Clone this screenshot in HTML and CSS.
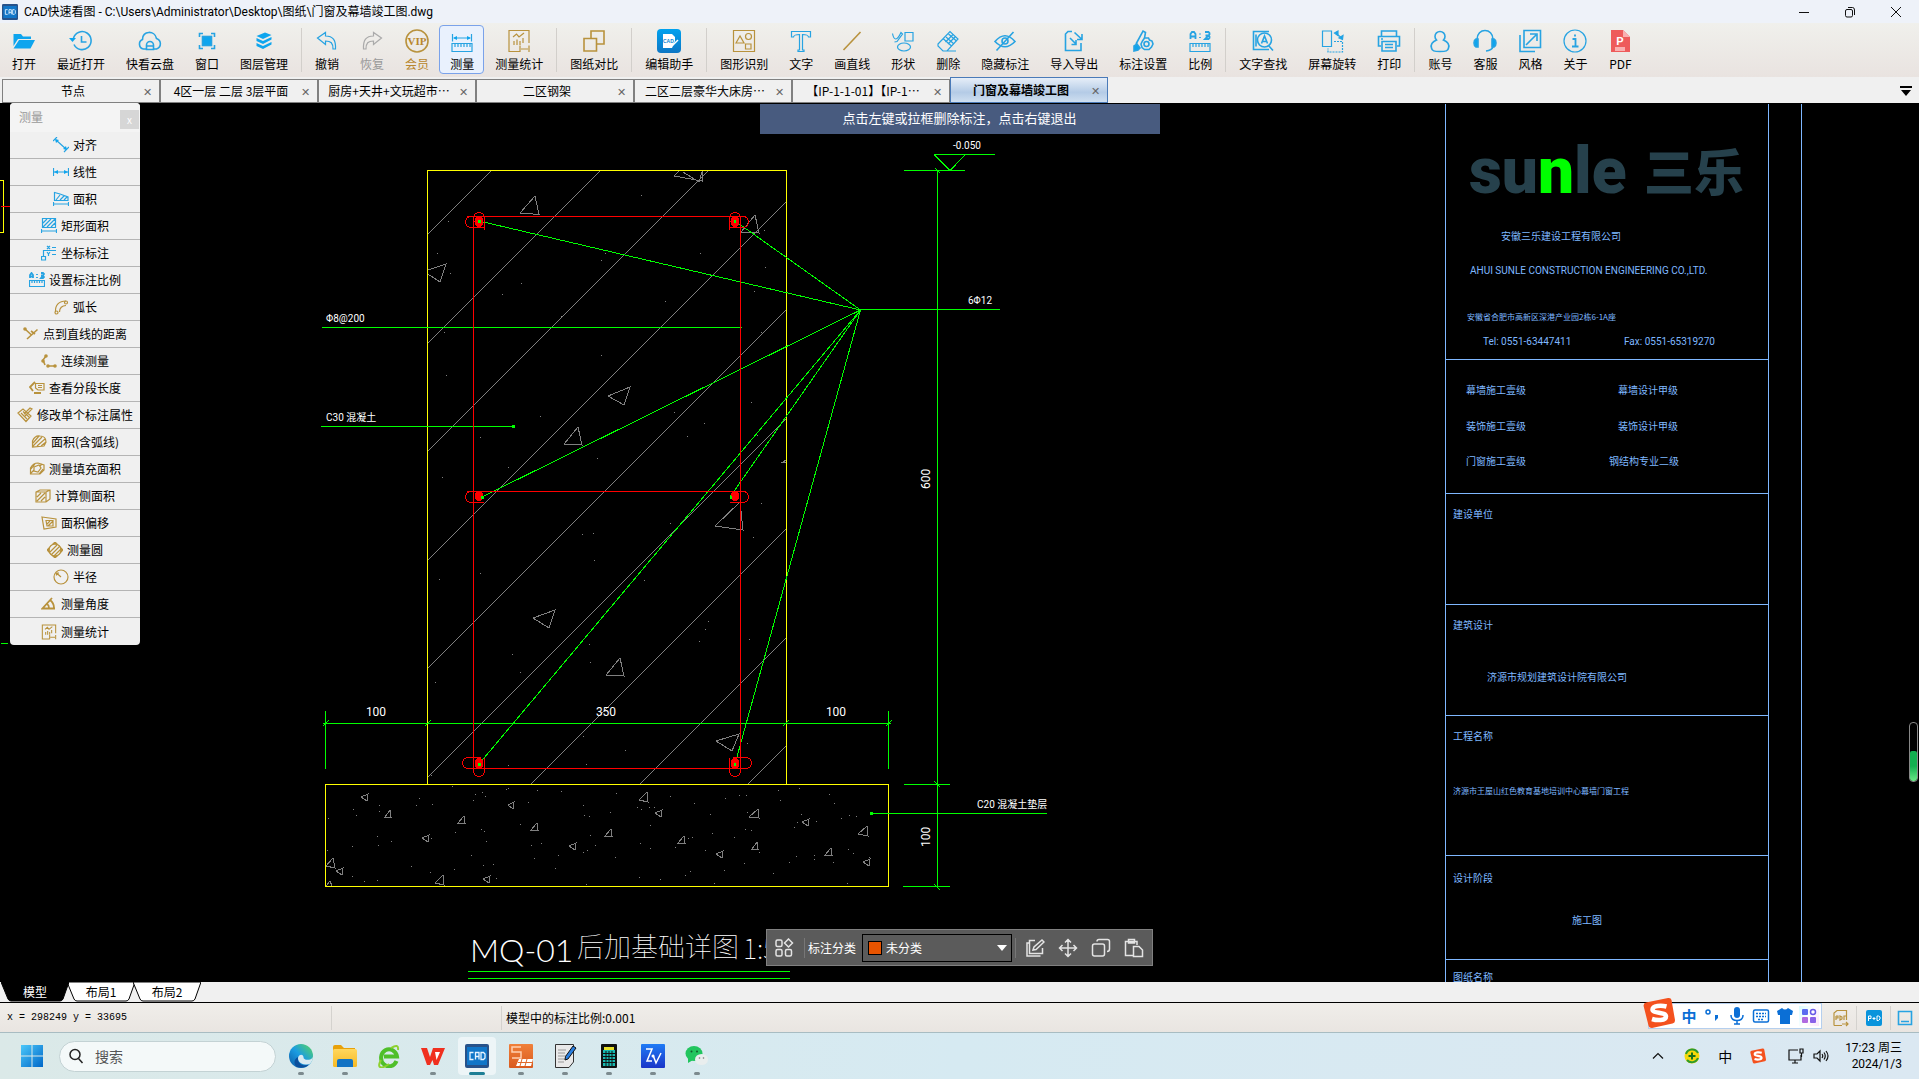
FILE: index.html
```html
<!DOCTYPE html>
<html lang="zh-CN">
<head>
<meta charset="utf-8">
<title>CAD快速看图</title>
<link rel="stylesheet" href="styles.css">
</head>
<body>
<svg class="defs" aria-hidden="true">
  <defs>
    <linearGradient id="azure" x1="0" y1="0" x2="0" y2="1"><stop offset="0" stop-color="#00a2ef"/><stop offset="1" stop-color="#0d76c4"/></linearGradient>
    <linearGradient id="win" x1="0" y1="0" x2="1" y2="1"><stop offset="0" stop-color="#4cc8fa"/><stop offset="1" stop-color="#0067c8"/></linearGradient>
    <linearGradient id="edge" x1="0" y1="1" x2="1" y2="0"><stop offset="0" stop-color="#0c59a4"/><stop offset=".5" stop-color="#1b9de2"/><stop offset="1" stop-color="#5ad85a"/></linearGradient>
    <linearGradient id="fold" x1="0" y1="0" x2="0" y2="1"><stop offset="0" stop-color="#ffd75e"/><stop offset="1" stop-color="#f7b923"/></linearGradient>
    <linearGradient id="orange" x1="0" y1="0" x2="0" y2="1"><stop offset="0" stop-color="#f0803a"/><stop offset="1" stop-color="#d95a1e"/></linearGradient>
    <linearGradient id="zw" x1="0" y1="0" x2="0" y2="1"><stop offset="0" stop-color="#1f7bf5"/><stop offset="1" stop-color="#1b35c8"/></linearGradient>
    <symbol id="sogou" viewBox="0 0 32 32"><path d="M3 5.500L25 1Q28 .5 28.500 3L32 23Q32 26 29.500 26.500L9 31Q6 31 5.500 28.500L.6 9Q.4 6.200 3 5.500Z" fill="#f4511e"/><path d="M23.500 9.500C18 8 9.500 8.500 9.500 12.500C9.500 17 23 14.500 23 19.500C23 24 13.500 23.500 9 22" fill="none" stroke="#fff" stroke-width="4.500"/></symbol>
    <symbol id="cad" viewBox="0 0 24 24"><rect width="24" height="24" rx="2" fill="#27528a"/><rect x="2" y="3" width="20" height="18" fill="#1176c8"/><path d="M8.500 8.500H5V15.500H8.500M10.500 15.500V8.500H14V15.500M10.500 12.500H14M16 8.500H18.500L20 10V14L18.500 15.500H16Z" fill="none" stroke="#e8f4ff" stroke-width="1.300"/></symbol>
    <symbol id="ruler" viewBox="0 0 24 24"><path d="M2 14.500H22V22.500H2ZM5 15V18M8 15V18M11 15V18M14 15V18M17 15V18M20 15V18"/></symbol>
    <symbol id="stats" viewBox="0 0 24 24"><path d="M13 22.500H2V1.500H22V14M6 8L9.500 5L12 8L17 4M7 12V16M10 10.500V16M13 12V16M16 9V14M13 16.500V23M22 16.500V23M14 20H21"/></symbol>
  </defs>
</svg>

<div class="app">
  <header class="titlebar">
    <svg class="ic16"><use href="#cad"/></svg>
    <h1 class="title">CAD快速看图 - C:\Users\Administrator\Desktop\图纸\门窗及幕墙竣工图.dwg</h1>
    <button class="wbtn" aria-label="最小化"><svg class="ic12" viewBox="0 0 12 12"><path d="M1 6.500H11"/></svg></button>
    <button class="wbtn" aria-label="还原"><svg class="ic12" viewBox="0 0 12 12"><rect x="1.500" y="3.500" width="7" height="7.500" rx="1.500"/><path d="M4 1.500H8.500Q10.500 1.500 10.500 4V9"/></svg></button>
    <button class="wbtn" aria-label="关闭"><svg class="ic12" viewBox="0 0 12 12"><path d="M1 1L11 11M11 1L1 11"/></svg></button>
  </header>

  <nav class="toolbar">
    <button class="tool"><svg viewBox="0 0 24 24"><path class="fb" d="M1.500 5H9L11 7.500H19V10H6L1.500 17ZM7 11H23L18.500 19.500H1.500Z"/></svg>打开</button>
    <button class="tool"><svg class="b2" viewBox="0 0 24 24"><path d="M4.500 9A9 9 0 1 1 5 15.500M12.500 7V13H17.500"/><path class="fb" stroke="none" d="M0 9H7L3.500 13Z"/></svg>最近打开</button>
    <button class="tool"><svg class="b2" viewBox="0 0 24 24"><path d="M8 20H5.500A5 5 0 0 1 4.500 10.500C4 1.500 17 1 18.500 9.500A5.500 5.500 0 0 1 18.500 20H16M8.500 20.500V16A3.500 3.500 0 0 1 15.500 16V20.500ZM8.500 17H15.500"/></svg>快看云盘</button>
    <button class="tool"><svg class="b2" viewBox="0 0 24 24"><rect class="fb" x="7.500" y="7.500" width="9" height="9"/><path d="M4.500 8V4.500H8M16 4.500H19.500V8M4.500 16V19.500H8M16 19.500H19.500V16"/></svg>窗口</button>
    <button class="tool"><svg viewBox="0 0 24 24"><path class="fb" d="M4.500 7L13 3.500L19.500 6L11 10ZM4.500 9L11 12L19.500 8V10.500L11 15L4.500 12ZM4.500 14L11 17L19.500 13V15.500L11 20L4.500 17Z"/></svg>图层管理</button>
    <span class="sep"></span>
    <button class="tool"><svg class="b1" viewBox="0 0 24 24"><path d="M2.500 9L10.500 3.500V7C18 7 21 11 20.500 20H18C18 14 16 12 10.500 12V15.500Z"/></svg>撤销</button>
    <button class="tool off"><svg class="g1" viewBox="0 0 24 24"><path d="M21.500 9L13.500 3.500V7C6 7 3 11 3.500 20H6C6 14 8 12 13.500 12V15.500Z"/></svg>恢复</button>
    <button class="tool vip"><svg class="o2" viewBox="0 0 24 24"><circle cx="12" cy="12" r="11"/><text class="viptx" x="12" y="16">VIP</text></svg>会员</button>
    <button class="tool on"><svg class="b1" viewBox="0 0 24 24"><path d="M2.500 5V12.500M21.500 5V12.500M4 9H20"/><path class="fb" stroke="none" d="M3 9L7 7V11ZM21 9L17 7V11Z"/><use href="#ruler"/></svg>测量</button>
    <button class="tool"><svg class="o1" viewBox="0 0 24 24"><use href="#stats"/></svg>测量统计</button>
    <span class="sep"></span>
    <button class="tool"><svg class="o2" viewBox="0 0 24 24"><path d="M9 9V2H22V15H14.500M2 9.500H14.500V22H2Z"/></svg>图纸对比</button>
    <span class="sep"></span>
    <button class="tool"><svg viewBox="0 0 24 24"><rect width="24" height="24" rx="4" fill="url(#azure)"/><path fill="#fff" d="M6 5H15L18 8V12L15 19H6Z"/><path fill="none" stroke="#fff" stroke-width="1.500" d="M15 17L21 11"/><text class="cadtx" x="6" y="14">CAD</text></svg>编辑助手</button>
    <span class="sep"></span>
    <button class="tool"><svg class="o1" viewBox="0 0 24 24"><path d="M1.500 1.500H22.500V22.500H1.500ZM4 14L8 7L12 14Z"/><circle cx="16.500" cy="7.500" r="3"/><path d="M13.500 15H19V20H13.500Z"/></svg>图形识别</button>
    <button class="tool"><svg class="b1" viewBox="0 0 24 24"><path d="M2.500 2.500H21.500V8H19.500C19 6 18 5.500 13.500 5.500V21H15V22.500H9V21H10.500V5.500C6 5.500 5 6 4.500 8H2.500Z"/></svg>文字</button>
    <button class="tool"><svg class="o2" viewBox="0 0 24 24"><path d="M3.500 21L20.500 3"/></svg>画直线</button>
    <button class="tool"><svg class="b1" viewBox="0 0 24 24"><path d="M14 3.500H22V12H14ZM1.500 4.500C3 12 6 12 10 3.500L11.500 5L6 12.500L3.500 13"/><ellipse cx="13" cy="18" rx="6.500" ry="4"/></svg>形状</button>
    <button class="tool"><svg class="b1" viewBox="0 0 24 24"><path d="M2 15L14 2.500L22 10L11 22H7L2 17ZM7 9.500L15.500 17M8 22H20"/><path d="M10 8L18 15M12.500 5L20.500 12M17 5.500L9.500 13M19.500 7.500L12 15"/></svg>删除</button>
    <button class="tool"><svg class="b2" viewBox="0 0 24 24"><path d="M2 12.500Q12 1 22 12.500Q12 23 2 12.500ZM3.500 21.500L20.500 3"/><circle cx="12" cy="12" r="3"/></svg>隐藏标注</button>
    <button class="tool"><svg class="b2" viewBox="0 0 24 24"><path d="M10 2.500H6L3.500 5V21.500H19V14M8 9L14 15M14 11V15.500H9.500M19.500 10L12.500 3.500M20 5V10.500H15"/></svg>导入导出</button>
    <button class="tool"><svg class="b2" viewBox="0 0 24 24"><path class="fb" d="M3 22V17L6 15L9 19L7 21Z"/><path d="M5 15L12 2L14.500 3.500L13.500 9"/><circle cx="15.500" cy="15" r="2.500"/><path d="M13.500 9H17.500L18.500 11L21 12L22 15L20.500 18L18 20.500H13.500L11 18.500L10 15L11.500 12Z"/></svg>标注设置</button>
    <button class="tool"><svg class="b1" viewBox="0 0 24 24"><path class="thick" d="M2.500 10V5L4 3H6L7.500 5V10M2.500 7.500H7.500M12 4.500V5.500M12 8V9M17 3H20.500L21.500 4V5.500L20.500 6.500H17.500M20.500 6.500L21.500 7.500V9L20.500 10H17Z"/><use href="#ruler"/></svg>比例</button>
    <span class="sep"></span>
    <button class="tool"><svg class="b2" viewBox="0 0 24 24"><path d="M18 20.500H2.500V2.500H18M5 5.500V17.500M17 16L22 21.500"/><circle cx="13.500" cy="11" r="7"/><path d="M10.500 14.500L13.500 7L16.500 14.500M11.500 12.500H15.500"/></svg>文字查找</button>
    <button class="tool"><svg class="b1" viewBox="0 0 24 24"><path d="M2.500 2H11.500V17.500H2.500Z"/><path stroke-dasharray="2 1" d="M14 12.500H22.500V23H8V19.500"/><path d="M16 4.500L22 9"/><path class="fb" d="M14.500 4L18 2V6.500ZM22.500 10.500L19 9L23 6.500Z"/></svg>屏幕旋转</button>
    <button class="tool"><svg class="b2" viewBox="0 0 24 24"><path d="M4.500 7V2H19.500V7M4 17H1.500V7.500H22.500V17H20M5 12.500H19V22H5ZM8 15.500H16M8 18.500H16M4 10H6"/></svg>打印</button>
    <span class="sep"></span>
    <button class="tool"><svg class="b2" viewBox="0 0 24 24"><path d="M8.500 11A5 5 0 1 1 15.500 11C20 13 21.500 16 20.500 19C20 22 18 22.500 12 22.500S4 22 3.500 19C2.500 16 4 13 8.500 11Z"/></svg>账号</button>
    <button class="tool"><svg class="b2" viewBox="0 0 24 24"><path d="M4 10.500C4 -1.500 20 -1.500 20 10.500M20 18C19 20.500 17 21.500 13 22"/><path class="fb" d="M5 10V18H3Q1 17 1 14T3 10ZM19 10V18H21Q23 17 23 14T21 10Z"/></svg>客服</button>
    <button class="tool"><svg class="b2" viewBox="0 0 24 24"><path d="M6 1.500H22.500V18.500H6ZM2 6V22.500H17M8 16L18 6M12 5H19V12"/></svg>风格</button>
    <button class="tool"><svg class="b1" viewBox="0 0 24 24"><circle cx="12" cy="12" r="11"/><path class="thick" d="M12 5.500V7.500M9.500 10H12.500V17M9 17.500H15.500"/></svg>关于</button>
    <button class="tool"><svg viewBox="0 0 24 24"><path fill="#ee5b5b" d="M3 1H15L22 8V23H3Z"/><path fill="#f9b0b0" d="M15 1L22 8H15ZM7 18H17V22H7Z"/><text class="pdftx" x="12" y="16">P</text></svg>PDF</button>
  </nav>

  <div class="tabs">
    <div class="tab"><button class="tabname">节点</button><button class="x" aria-label="关闭标签">✕</button></div>
    <div class="tab"><button class="tabname">4区一层 二层 3层平面</button><button class="x" aria-label="关闭标签">✕</button></div>
    <div class="tab"><button class="tabname">厨房+天井+文玩超市⋯</button><button class="x" aria-label="关闭标签">✕</button></div>
    <div class="tab"><button class="tabname">二区钢架</button><button class="x" aria-label="关闭标签">✕</button></div>
    <div class="tab"><button class="tabname">二区二层豪华大床房⋯</button><button class="x" aria-label="关闭标签">✕</button></div>
    <div class="tab"><button class="tabname">【IP-1-1-01】【IP-1⋯</button><button class="x" aria-label="关闭标签">✕</button></div>
    <div class="tab active"><button class="tabname">门窗及幕墙竣工图</button><button class="x" aria-label="关闭标签">✕</button></div>
    <button class="tablist" aria-label="标签列表"><svg class="ic12" viewBox="0 0 12 12"><path d="M0 1H12V3H0ZM1 5H11L6 11Z"/></svg></button>
  </div>

  <main class="canvas">
    <svg class="drawing">
      <defs><clipPath id="col"><rect x="428" y="171" width="358" height="613"/></clipPath></defs>
      <g transform="translate(0,-103)">
        <g class="gray" clip-path="url(#col)">
          <path d="M427.500 234.500L491.500 170.500M427.500 343.500L600.500 170.500M427.500 451.500L708.500 170.500M427.500 560.500L817.500 170.500M427.500 668.500L925.500 170.500M427.500 777.500L1034.500 170.500M530.500 784.500L786.500 528.500M639.500 784.500L786.500 637.500M747.500 784.500L786.500 745.500"/>
          <path d="M535 196L520 213L539 214.500ZM446 264L424 271.500L440 282ZM630 387L608 396L624 405ZM578 427L564 444L582 445ZM755 215L741 232L759 233ZM740 502L715 526L743 530ZM555 610L533 618L549 628ZM620 658L606 675L624 676ZM739 734L716 741L732 751ZM682 168L674 176L702 181V168ZM683 172L699 182L702 172M786 460L783 462H786"/>
          <path d="M448 221h1M437 253h1M450 273h1M521 283h1M502 294h1M601 260h1M605 253h1M700 253h1M641 195h1M665 301h1M561 316h1M444 332h1M601 355h1M446 375h1M540 416h1M674 412h1M704 423h1M687 436h1M597 458h1M480 437h1M508 467h1M442 477h1M764 230h1M765 267h1M754 291h1M761 332h1M751 402h1M757 435h1M761 503h1M582 534h1M593 533h1M594 560h1M670 523h1M644 580h1M439 579h1M480 573h1M512 654h1M520 672h1M590 662h1M589 644h1M435 682h1M708 621h1M705 629h1M699 641h1M749 639h1M753 537h1M583 736h1M625 750h1M508 765h1M586 764h1M747 743h1M431 775h1"/>
        </g>
        <g class="gray">
          <path d="M368 794L361 797L367 801ZM514 802L508 805L513 809ZM429 835L422 838L428 842ZM343 868L336 871L342 875ZM490 876L483 879L489 883ZM576 843L569 846L575 850ZM662 810L655 813L661 817ZM809 819L802 822L808 826ZM723 851L716 854L722 858ZM870 859L863 862L869 866Z"/>
          <path d="M390 810L385 817H391ZM464 816L458 823H465ZM537 823L531 830H538ZM611 829L605 836H612ZM684 836L678 843H685ZM757 842L752 849H758ZM831 848L825 855H832ZM333 858L326 866L335 868ZM443 875L435 883L444 885ZM647 792L639 800L648 802ZM758 809L749 817L759 818ZM867 826L858 834L868 836ZM326 886L330 881L332 886"/>
          <path d="M452 786h1M419 798h1M416 805h1M432 804h1M379 805h1M379 811h1M353 809h1M356 815h1M328 818h1M377 836h1M378 845h1M391 841h1M352 846h1M327 850h1M411 866h1M430 872h1M454 869h1M352 876h1M364 881h1M377 880h1M431 838h1M455 832h1M473 800h1M475 794h1M482 792h1M485 796h1M506 789h1M508 788h1M528 802h1M537 790h1M561 791h1M520 824h1M481 829h1M484 831h1M486 841h1M471 855h1M483 865h1M493 864h1M496 878h1M531 845h1M541 843h1M534 858h1M558 855h1M555 868h1M583 805h1M584 815h1M589 816h1M610 812h1M616 793h1M590 835h1M595 845h1M583 852h1M587 850h1M615 857h1M637 807h1M641 809h1M649 807h1M654 807h1M670 796h1M650 825h1M640 843h1M650 848h1M675 847h1M688 838h1M692 837h1M639 877h1M660 879h1M685 875h1M690 871h1M694 803h1M710 814h1M712 833h1M705 850h1M734 837h1M745 829h1M751 830h1M747 812h1M739 795h1M746 795h1M725 798h1M778 790h1M780 800h1M799 788h1M801 814h1M797 822h1M794 827h1M816 821h1M829 794h1M834 803h1M841 818h1M849 815h1M856 816h1M848 849h1M853 853h1M814 855h1M814 859h1M796 856h1M789 862h1M773 873h1M833 862h1M847 883h1M744 863h1M724 870h1M714 883h1M586 884h1M759 852h1M869 857h1"/>
        </g>
        <path class="yellow" d="M427.500 784V170.500H786.500V784M325.500 784.500H888.500V886.500H325.500ZM0 180.500H3.500V232.500H0"/>
        <g class="green">
          <path d="M322 327.500H742M321 426.500H514M323 723.500H891M325.500 711V769M888.500 711V769M860 309.500H1000M937.500 170V888M904 170.500H965M904 784.500H950M903 886.500H950M871 813.500H1047M934 154.500H995M468 971.500H790M468 978.500H790M1 643.500H8"/>
          <path d="M934 154.500L950 170.500L965.500 154.500M860.500 310L479 221M860.500 310L735 221M860.500 310L482 497M860.500 310L730 497M860.500 310L479 764M860.500 310L735 764M323 726L329 720M425 726L431 720M783 726L789 720M886 726L892 720M935 168L940 173M934 781L940 787M934 884L940 890"/>
          <path class="endpt" d="M512 426.500h3M870 813.500h3"/>
        </g>
        <g class="red">
          <path d="M473.500 216V772M740.500 216V772M467 216.500H746M467 491.500H746M467 768.500H747M1 206.500H10"/>
          <g id="hooks">
            <path d="M484 227.500H471A5.500 5.500 0 0 1 471 216.500M473.500 218A5.500 5.500 0 0 1 484.500 218V230M484 502.500H471A5.500 5.500 0 0 1 471 491.500M481 757.500H468A5.500 5.500 0 0 0 468 768.500M484.500 758V771A5.500 5.500 0 0 1 473.500 771"/>
            <path class="bar" d="M475 221.500A4 5 0 1 1 483 221.500A4 5 0 1 1 475 221.500M475 496A4 5 0 1 1 483 496A4 5 0 1 1 475 496M475 763.500A4 5 0 1 1 483 763.500A4 5 0 1 1 475 763.500"/>
          </g>
          <use href="#hooks" transform="translate(1214,0) scale(-1,1)"/>
        </g>
        <path class="green endpt" d="M478 221.500h3M734 221.500h2M481 497h3M730 497h2M478 764h3M734 764h2"/>
        <g class="cadtext">
          <text x="953" y="149">-0.050</text>
          <text x="326" y="322">Φ8@200</text>
          <text x="326" y="421">C30 混凝土</text>
          <text x="968" y="304">6Φ12</text>
          <text x="977" y="808">C20 混凝土垫层</text>
        </g>
        <g class="cadtext dim">
          <text x="376" y="716">100</text>
          <text x="606" y="716">350</text>
          <text x="836" y="716">100</text>
          <text transform="translate(930,479) rotate(-90)">600</text>
          <text transform="translate(930,837) rotate(-90)">100</text>
        </g>
        <text class="big latin" x="470" y="962">MQ-01</text>
        <text class="big" x="577" y="957">后加基础详图</text>
        <text class="big" x="743" y="959">1:5</text>
        <path class="blue" d="M1445.500 104V982M1768.500 104V982M1801.500 104V982M1445 359.500H1768M1445 493.500H1768M1445 604.500H1768M1445 715.500H1768M1445 855.500H1768M1445 959.500H1768"/>
        <text class="logo" x="1469" y="193">su<tspan class="lime">n</tspan>le</text>
        <text class="logo zh" x="1644" y="191">三乐</text>
        <g class="block">
          <text x="1501" y="240">安徽三乐建设工程有限公司</text>
          <text class="en" x="1470" y="274">AHUI SUNLE CONSTRUCTION ENGINEERING CO.,LTD.</text>
          <text class="tiny" x="1467" y="320">安徽省合肥市高新区深港产业园2栋6-1A座</text>
          <text class="en" x="1483" y="345">Tel: 0551-63447411</text>
          <text class="en" x="1624" y="345">Fax: 0551-65319270</text>
          <text x="1466" y="394">幕墙施工壹级</text><text x="1618" y="394">幕墙设计甲级</text>
          <text x="1466" y="430">装饰施工壹级</text><text x="1618" y="430">装饰设计甲级</text>
          <text x="1466" y="465">门窗施工壹级</text><text x="1609" y="465">钢结构专业二级</text>
          <text x="1453" y="518">建设单位</text>
          <text x="1453" y="629">建筑设计</text>
          <text x="1487" y="681">济源市规划建筑设计院有限公司</text>
          <text x="1453" y="740">工程名称</text>
          <text class="tiny" x="1453" y="794">济源市王屋山红色教育基地培训中心幕墙门窗工程</text>
          <text x="1453" y="882">设计阶段</text>
          <text x="1572" y="924">施工图</text>
          <text x="1453" y="981">图纸名称</text>
        </g>
      </g>
    </svg>

    <div class="hint">点击左键或拉框删除标注，点击右键退出</div>

    <aside class="palette">
      <div class="phead"><span>测量</span><button class="px" aria-label="关闭测量">x</button></div>
      <div class="plist">
        <button class="pi"><svg class="b1" viewBox="0 0 16 16"><path d="M3 3L13 12M0 4L4 0M11 15L16 10"/><path class="fb" stroke="none" d="M2 2L6 3L3 6ZM14 13L10 12L13 9Z"/></svg>对齐</button>
        <button class="pi"><svg class="b1" viewBox="0 0 16 16"><path d="M.5 4V12M15.500 4V12M1 8H15"/><path class="fb" stroke="none" d="M1 8L5 6V10ZM15 8L11 6V10Z"/></svg>线性</button>
        <button class="pi"><svg class="b1" viewBox="0 0 16 16"><path d="M1.500 9.500V1.500L7 3L15 6V9.500ZM3 9L7 4M7 9L11 5M11 9L14 6M.5 11V15M15.500 11V15M1 13H15"/></svg>面积</button>
        <button class="pi"><svg class="b1" viewBox="0 0 16 16"><path d="M1.500 .5H14.500V9.500H1.500ZM2 5L6 1M2 9L10 1M6 9L14 1M10 9L14 5M.5 11V15M15.500 11V15M1 13H15"/></svg>矩形面积</button>
        <button class="pi"><svg class="b1" viewBox="0 0 16 16"><path d="M.5 11.500H4.500V15H.5ZM2.500 11V5.500H15M6 1L9 4M9 1L6 4M11 2.500H15M6 7L7.500 9L9 7M7.500 9V11M11 9.500H15"/></svg>坐标标注</button>
        <button class="pi"><svg class="b1" viewBox="0 0 16 16"><path class="thick" d="M1 6V3L2.500 1L4 3V6M1 4.500H4M8 2V3M8 5V6M12 1H14L15 2L14 3.500H12M14 3.500L15 5L14 6H12Z"/><path d="M.5 8.500H15.500V14.500H.5ZM3 9V11M5.500 9V11M8 9V11M10.500 9V11M13 9V11"/></svg>设置标注比例</button>
        <button class="pi"><svg class="o1" viewBox="0 0 16 16"><path d="M2.500 13C2 6 6 2 13 2M6.500 13C6.500 9 9 6.500 13 6.500"/><circle cx="3.500" cy="13.500" r="1.500"/><circle cx="13" cy="3.500" r="1.500"/></svg>弧长</button>
        <button class="pi"><svg class="o2" viewBox="0 0 16 16"><path d="M2 3L8.500 9M4 13L14.500 3.500M8 5L12 8"/><circle class="fo" cx="2" cy="3" r="1"/></svg>点到直线的距离</button>
        <button class="pi"><svg class="o2" viewBox="0 0 16 16"><path d="M5 3L2 7L4 12M7 13H14"/><circle class="fo" cx="5" cy="3" r="1"/><circle class="fo" cx="2" cy="8" r="1"/><circle class="fo" cx="7" cy="13" r="1"/><circle class="fo" cx="14" cy="13" r="1"/></svg>连续测量</button>
        <button class="pi"><svg class="o1" viewBox="0 0 16 16"><path class="thick" d="M6 2L1 7L4 11M5 13H12"/><path d="M6.500 3.500H15V10H9L6.500 8ZM9 5.500H13M9 7.500H13"/></svg>查看分段长度</button>
        <button class="pi"><svg class="o1" viewBox="0 0 16 16"><path d="M1 6L6 2L14 9L9 14.500ZM4 6L10 12M6 4.500L12 10M8 9L15 2L13 1L7 7"/></svg>修改单个标注属性</button>
        <button class="pi"><svg class="o1" viewBox="0 0 16 16"><path d="M1.500 13V7Q4 1 9 2Q15 2 15 8L13 12ZM2 9L8 2M2 12L11 3M6 12L14 5M10 12L15 8"/></svg>面积(含弧线)</button>
        <button class="pi"><svg class="o1" viewBox="0 0 16 16"><path d="M1.500 13V7Q4 2 9 2L15 4V9L11 13ZM2 8L6 3M2 12L5 9M5 6L10 4L12 7L9 11L5 10ZM10 13L14 8M11 5L13 3"/></svg>测量填充面积</button>
        <button class="pi"><svg class="o1" viewBox="0 0 16 16"><path d="M1 4L5 2H15V11L11 14H1ZM1 4H11V14M11 4L15 2M2 9L6 5M2 13L10 5M6 13L10 9"/></svg>计算侧面积</button>
        <button class="pi"><svg class="o1" viewBox="0 0 16 16"><path d="M1 2L15 4V12L3 14ZM5 5.500H12V11H6ZM6 9L9 6M7 11L12 6"/></svg>面积偏移</button>
        <button class="pi"><svg class="o1" viewBox="0 0 16 16"><circle cx="8" cy="8" r="6"/><path d="M3 10L10 3M4 13L13 4M7 14L14 7"/><path class="fo" d="M8 0L10 2H6ZM8 16L10 14H6ZM0 8L2 6V10ZM16 8L14 6V10Z"/></svg>测量圆</button>
        <button class="pi"><svg class="o1" viewBox="0 0 16 16"><circle cx="8" cy="8" r="7"/><path d="M8 8L3.500 4M3.500 6.500V4H6"/></svg>半径</button>
        <button class="pi"><svg class="o1" viewBox="0 0 16 16"><path class="thick" d="M11 2L1.500 12.500H14M9 4Q13 7 13 12M6 8Q8 9 8 12"/></svg>测量角度</button>
        <button class="pi"><svg class="o2" viewBox="0 0 24 24"><use href="#stats"/></svg>测量统计</button>
      </div>
    </aside>

    <div class="meter"><span></span></div>

    <form class="markbar">
      <svg class="w2 ic20" viewBox="0 0 20 20"><rect x="2" y="2" width="6" height="6.500" rx="1.500"/><path d="M14.500 1L18.500 5L14.500 9L10.500 5Z"/><rect x="2" y="11.500" width="6" height="6.500" rx="1.500"/><rect x="11.500" y="11.500" width="6" height="6.500" rx="1.500"/></svg>
      <span class="msep"></span>
      <label for="cat">标注分类</label>
      <span class="combo"><i class="swatch"></i><select id="cat"><option>未分类</option></select></span>
      <span class="msep"></span>
      <button type="button" class="mb" aria-label="编辑"><svg class="w2 ic20" viewBox="0 0 20 20"><path d="M10 2.500H4.500V15.500H17.500V10M4.500 5H2V18H15.500M8 12L9 9L17 2L19 4L11 11.500Z"/></svg></button>
      <button type="button" class="mb" aria-label="移动"><svg class="w2 ic20" viewBox="0 0 20 20"><path d="M10 2V18M2 10H18M7 4.500L10 1.500L13 4.500M7 15.500L10 18.500L13 15.500M4.500 7L1.500 10L4.500 13M15.500 7L18.500 10L15.500 13"/></svg></button>
      <button type="button" class="mb" aria-label="复制"><svg class="w2 ic20" viewBox="0 0 20 20"><rect x="1.500" y="6" width="12" height="12" rx="2"/><path d="M6 3.500Q6 1.500 8 1.500H16.500Q18.500 1.500 18.500 3.500V11Q18.500 13.500 16 13.500"/></svg></button>
      <button type="button" class="mb" aria-label="粘贴"><svg class="w2 ic20" viewBox="0 0 20 20"><path d="M9 17.500H1.500V3.500H13V7M4.500 1.500H10.500V5H4.500ZM9.500 8.500H15L18.500 12V18.500H9.500Z"/></svg></button>
    </form>
  </main>

  <div class="sheets">
    <button class="sheet cur"><svg viewBox="0 0 68 20" preserveAspectRatio="none"><path d="M0 0L7 17Q8 19 10 19H59Q61 19 62 17L68 0Z"/></svg><span>模型</span></button>
    <button class="sheet"><svg viewBox="0 0 68 20" preserveAspectRatio="none"><path d="M0 0L7 17Q8 19 10 19H59Q61 19 62 17L68 0Z"/></svg><span>布局1</span></button>
    <button class="sheet"><svg viewBox="0 0 68 20" preserveAspectRatio="none"><path d="M0 0L7 17Q8 19 10 19H59Q61 19 62 17L68 0Z"/></svg><span>布局2</span></button>
  </div>

  <footer class="status">
    <span class="coords">x = 298249 y = 33695</span>
    <span class="blank"></span>
    <span class="ratio">模型中的标注比例:0.001</span>
    <div class="ime">
      <svg class="imelogo"><use href="#sogou"/></svg>
      <span class="zhong">中</span>
      <svg class="ic20" viewBox="0 0 20 20"><circle cx="5" cy="6" r="2" fill="none" stroke="#0b6fd6" stroke-width="1.500"/><path d="M12 9H15V12L12 15" fill="#0b6fd6"/></svg>
      <svg class="ic20" viewBox="0 0 20 20"><rect x="7" y="1" width="6" height="11" rx="3" fill="#0b6fd6"/><path d="M4 9Q4 14.500 10 14.500T16 9M10 15V18M7 18H13" fill="none" stroke="#0b6fd6" stroke-width="1.500"/></svg>
      <svg class="ic20" viewBox="0 0 20 20"><rect x="2.500" y="4" width="15" height="12" rx="1.500" fill="none" stroke="#0b6fd6" stroke-width="1.500"/><path d="M5 7.500H15M5 10.500H15M7 13.500H13" stroke="#0b6fd6" stroke-width="1.500" stroke-dasharray="2 1"/></svg>
      <svg class="ic20" viewBox="0 0 20 20"><path d="M2 5L7 2Q10 5 13 2L18 5L17 9H15V18H5V9H3Z" fill="#0b6fd6"/></svg>
      <svg class="ic20 glow" viewBox="0 0 20 20"><rect x="3" y="3" width="6" height="6" rx="1" fill="#5b6cf0"/><circle cx="14" cy="6" r="2.500" fill="none" stroke="#6a5be8" stroke-width="1.500"/><rect x="3" y="11" width="6" height="6" rx="1" fill="#b06ae0"/><rect x="11" y="11" width="6" height="6" rx="1" fill="#8a62e8"/></svg>
    </div>
    <button class="sb" aria-label="导出PDF"><svg class="o1 ic20" viewBox="0 0 20 20"><path d="M4 17.500V5L7 2.500H16.500V12M4 17.500H12M12 16H18M16 14L18 16L16 18M6 8V12M6 8H8V10H6M10 8V12L12 11V9ZM14 12V8H16"/></svg></button>
    <button class="sb" aria-label="P+D"><svg class="ic20" viewBox="0 0 20 20"><rect x="2" y="2" width="16" height="16" rx="2" fill="#0a94dc"/><path d="M4.500 13V8H7V10.500H4.500M8.500 10.500H11.500M10 9V12M13 8V12.500H14.500L16 11V9L14.500 8Z" fill="none" stroke="#fff"/></svg></button>
    <button class="sb" aria-label="窗口"><svg class="b2 ic20" viewBox="0 0 20 20"><path d="M3.500 3.500H16.500V16.500H3.500ZM6 13.500H14"/></svg></button>
  </footer>

  <div class="taskbar">
    <button class="task start" aria-label="开始"><svg viewBox="0 0 24 24"><path fill="url(#win)" d="M1 1H11.500V11.500H1ZM12.500 1H23V11.500H12.500ZM1 12.500H11.500V23H1ZM12.500 12.500H23V23H12.500Z"/></svg></button>
    <label class="search"><svg class="ic16" viewBox="0 0 16 16"><circle cx="7" cy="6.500" r="5" fill="none" stroke="#222" stroke-width="1.500"/><path d="M10.500 10.500L14.500 15" stroke="#222" stroke-width="1.500"/></svg><input type="text" placeholder="搜索" aria-label="搜索"></label>
    <button class="task run" aria-label="Edge"><svg viewBox="0 0 24 24"><circle cx="12" cy="12" r="12" fill="url(#edge)"/><path fill="#d9eaf1" d="M24 13C22 17 14 16.500 14.500 13C14 10 10 10 9 14C9 19 14 21 20 20.500C22 19 23.500 17 24 13Z"/><path fill="#0c4f9c" d="M9 13C8 19 13 23 20 20.500C17 24 12 24.500 8 23C4 20 5 15 9 13Z"/></svg></button>
    <button class="task run" aria-label="文件资源管理器"><svg viewBox="0 0 24 24"><path fill="#e8a10a" d="M0 3Q0 1 2 1H8L11 4H22V8H0Z"/><rect y="5" width="24" height="18" rx="1.500" fill="url(#fold)"/><path fill="#1273c4" d="M4 23V17Q4 15 6 15H18Q20 15 20 17V23Z"/></svg></button>
    <button class="task" aria-label="浏览器"><svg viewBox="0 0 24 24"><path fill="none" stroke="#4fbf2a" stroke-width="4" d="M19.500 17A8 8.500 0 1 1 20 12.500H7"/><path fill="none" stroke="#8ed12e" stroke-width="2" d="M4 16C-1 25 5 25 12 20M14 4Q22 -1 21 6"/></svg></button>
    <button class="task run" aria-label="WPS"><svg viewBox="0 0 24 24"><path fill="#f0301f" d="M0 4H6L9 13L12 4H24L17 21H13L11.500 16L9 21H6Z"/><path fill="#fff" d="M14 8H19L15.500 16Z"/></svg></button>
    <button class="task run now" aria-label="CAD快速看图"><svg><use href="#cad"/></svg></button>
    <button class="task run" aria-label="速写"><svg viewBox="0 0 24 24"><rect width="24" height="24" rx="1" fill="url(#orange)"/><path fill="none" stroke="#ffd0b0" stroke-width="1.500" d="M12 3H3V8H12V14H3"/><path fill="#fff" d="M10 15H24L22 22H7Z"/><path stroke="#e06a2a" d="M9 18.500H23M13 15L11 22M18 15L16 22"/></svg></button>
    <button class="task run" aria-label="记事本"><svg viewBox="0 0 24 24"><path fill="#e9e9e9" stroke="#333" d="M2.500 .5H20.500V18L16 23.500H2.500Z"/><path stroke="#999" d="M5 6H13M5 9H12M5 12H14M5 15H13M5 18H11"/><path fill="#2a7fe0" stroke="#111" d="M20 2L23 4L15 15L12 16L12.500 12.500Z"/></svg></button>
    <button class="task run" aria-label="计算器"><svg viewBox="0 0 24 24"><rect x="4" width="16" height="24" rx="1" fill="#111"/><rect x="6" y="6" width="12" height="16" fill="#18b8b0"/><rect x="7" y="3" width="10" height="3" fill="#e8e12a"/><path stroke="#111" d="M6 9.500H18M6 12.500H18M6 15.500H18M6 18.500H18M9 7V22M12 7V22M15 7V22"/></svg></button>
    <button class="task run" aria-label="ZWCAD"><svg viewBox="0 0 24 24"><rect width="24" height="24" rx="1" fill="url(#zw)"/><path fill="none" stroke="#fff" stroke-width="1.500" d="M5 5H11L6 17H11M12 11L15 19L20 9"/><circle cx="12" cy="12" r="1.500" fill="#fff"/></svg></button>
    <button class="task run" aria-label="微信"><svg viewBox="0 0 24 24"><ellipse cx="9" cy="9.500" rx="8.500" ry="7.500" fill="#22c55e"/><path fill="#22c55e" d="M3 14V19L8 16Z"/><ellipse cx="16.500" cy="15.500" rx="6.500" ry="5.500" fill="#e9eeee"/><circle cx="6.500" cy="7.500" r="1" fill="#125c2c"/><circle cx="12" cy="7.500" r="1" fill="#125c2c"/><circle cx="14.500" cy="14" r=".8" fill="#777"/><circle cx="18.500" cy="14" r=".8" fill="#777"/></svg></button>
    <div class="tray">
      <svg class="ic16 k" viewBox="0 0 16 16"><path d="M3 10.500L8 5.500L13 10.500"/></svg>
      <svg class="ic16" viewBox="0 0 16 16"><circle cx="8" cy="8" r="7.500" fill="#f5d90a"/><path d="M2 6A6.500 6.500 0 0 1 14 5M14 10A6.500 6.500 0 0 1 3 12" fill="none" stroke="#2d9a2d" stroke-width="2"/><path d="M8 4.500V11.500M4.500 8H11.500" stroke="#17731a" stroke-width="2"/></svg>
      <span class="lang">中</span>
      <svg class="ic16"><use href="#sogou"/></svg>
      <span class="net">
      <svg class="ic16 k" viewBox="0 0 16 16"><path d="M10 2H1V12H13V7M4 15H10M7 12V15M12 1H15V5H12ZM13.500 5V9"/></svg>
      <svg class="ic16 k" viewBox="0 0 16 16"><path d="M1 6H4L7 3V13L4 10H1ZM9 6Q10.500 8 9 10M11 4.500Q13.500 8 11 11.500M13 3Q17 8 13 13"/></svg>
      </span>
      <time class="clock">17:23 周三<br>2024/1/3</time>
    </div>
  </div>
</div>
</body>
</html>
```

FILE: styles.css
```css
* { box-sizing: border-box; }
body { margin: 0; font: 12px/16px "Noto Sans CJK SC", sans-serif; color: #000; }
button { font: inherit; color: inherit; background: none; border: 0; padding: 0; margin: 0; }
svg { display: block; flex: none; }
.defs { position: absolute; width: 0; height: 0; }
.app { display: flex; flex-direction: column; height: 100vh; min-width: 1700px; overflow: hidden; }

.ic12 { width: 12px; height: 12px; }
.ic16 { width: 16px; height: 16px; }
.ic20 { width: 20px; height: 20px; }
.b1, .b2, .o1, .o2, .g1, .w2, .k { fill: none; stroke-width: 1.2; }
.b1, .b2 { stroke: #27a3e2; }
.o1, .o2 { stroke: #b8923d; }
.b2, .o2 { stroke-width: 1.6; }
.g1 { stroke: #aaa; }
.k { stroke: #111; }
.w2 { stroke: #e4e4e4; stroke-width: 1.5; }
.fb { fill: #0ea5ee; }
.fo { fill: #b8923d; }
.thick { stroke-width: 1.8; }

.titlebar { display: flex; align-items: center; height: 23px; padding-left: 2px; background: #eef2f9; flex: none; }
.title { flex: 1; margin: 0 0 0 6px; font: 12px/20px Roboto, "Noto Sans CJK SC", sans-serif; }
.wbtn { width: 46px; height: 20px; display: grid; place-items: center; }
.wbtn svg { fill: none; stroke: #111; }

.toolbar { display: flex; height: 54px; padding: 2px 1px; background: linear-gradient(#f0f0ec, #e9e3e0); flex: none; }
.tool { display: flex; flex-direction: column; align-items: center; gap: 2px; height: 49px; padding: 3px 9px 0 10px; border: 1px solid transparent; border-radius: 4px; line-height: 18px; white-space: nowrap; }
.tool svg { width: 24px; height: 24px; }
.tool.on { background: #e9f1fd; border-color: #7aa2ea; }
.tool.off { color: #999; }
.tool.vip { color: #b8862d; }
.sep { width: 1px; height: 44px; margin: 3px 2px 0 3px; background: #d2cfcb; flex: none; }
.viptx { font: bold 11px "Liberation Serif", serif; text-anchor: middle; fill: #b8862d; stroke: none; }
.cadtx { font: bold 5px "Liberation Sans", sans-serif; fill: #0d86d4; }
.pdftx { font: bold 11px "Liberation Sans", sans-serif; text-anchor: middle; fill: #fff; }

.tabs { display: flex; align-items: flex-end; height: 26px; padding-left: 2px; background: #f0f0f0; flex: none; }
.tab { display: flex; align-items: center; width: 158px; height: 24px; padding-left: 8px; border: 1px solid #808080; flex: none; }
.tabname { flex: 1; text-align: center; white-space: nowrap; }
.x { width: 24px; font-size: 11px; color: #666; }
.tab.active { height: 26px; border-color: #4a7ab8; background: linear-gradient(#e6eef8, #b4cbe6 60%, #cfdff0); font-weight: bold; }
.tab.active .x { font-weight: normal; }
.tablist { margin: 0 7px 6px auto; }

.canvas { position: relative; flex: 1; min-height: 0; overflow: hidden; background: #000; }
.drawing { width: 100%; height: 100%; }
.gray, .yellow, .green, .red, .blue { fill: none; stroke-width: 1; shape-rendering: crispEdges; }
.gray { stroke: #808080; }
.yellow { stroke: #ff0; }
.green { stroke: #0f0; }
.red { stroke: #f00; }
.bar { fill: #f00; }
.blue { stroke: #7fb8ff; }
.endpt { stroke-width: 3; }
.cadtext { fill: #fff; font: 10px Roboto, "Noto Sans CJK SC", sans-serif; }
.dim { font-size: 12px; text-anchor: middle; }
.big { fill: #fff; font: 100 27px "Noto Sans CJK SC", sans-serif; }
.latin { font: 300 32px Lato, sans-serif; }
.logo { fill: #26414c; font: 900 64px Roboto, sans-serif; }
.logo.zh { font: 900 50px "Noto Sans CJK SC", sans-serif; }
.lime { fill: #0f0; }
.block { fill: #7fb8ff; font: 10px "Noto Sans CJK SC", sans-serif; }
.tiny { font-size: 8px; }
.en { font: 10px Roboto, sans-serif; }

.hint { position: absolute; top: 1px; left: 50%; width: 400px; height: 30px; margin-left: -200px; background: #485b7f; color: #fff; font-size: 13px; line-height: 28px; text-align: center; }

.palette { position: absolute; left: 10px; top: 0; width: 130px; border-radius: 4px; background: #f0f0f0; overflow: hidden; }
.phead { display: flex; justify-content: space-between; height: 29px; padding-left: 9px; color: #999; line-height: 27px; background: #f4f4f4; }
.px { width: 19px; height: 19px; margin: 7px 1px 0 0; background: #d6d6d6; color: #fff; font-size: 10px; line-height: 16px; }
.plist { display: grid; grid-auto-rows: 27px; }
.pi { display: flex; align-items: center; justify-content: center; gap: 4px; border-bottom: 1px solid #b4b4b4; white-space: nowrap; }
.pi:last-child { border-bottom: 0; }
.pi svg { width: 16px; height: 16px; }

.meter { position: absolute; right: 1px; top: 619px; width: 9px; height: 60px; border: 1px solid #888; border-radius: 4px; background: #000; overflow: hidden; display: flex; align-items: flex-end; }
.meter span { width: 100%; height: 30px; border-radius: 2px; background: linear-gradient(#12b050, #12b050 50%, #6be887); }

.markbar { position: absolute; left: 766px; bottom: 16px; display: flex; align-items: center; height: 37px; padding: 0 8px 0 7px; border: 1px solid #808080; background: #5b5b5b; color: #fff; }
.msep { width: 1px; height: 20px; margin: 0 3px 0 10px; background: #777; }
.combo { position: relative; margin-left: 6px; width: 150px; height: 28px; }
.combo::after { content: ""; position: absolute; right: 5px; top: 11px; border: 5px solid transparent; border-top: 6px solid #fff; border-bottom: 0; }
.combo select { appearance: none; width: 100%; height: 100%; padding: 0 0 0 23px; border: 1px solid #000; border-radius: 0; background: #5b5b5b; color: #fff; font: inherit; }
.swatch { position: absolute; left: 6px; top: 7px; width: 14px; height: 14px; border: 1px solid #000; background: #e85400; }
.combo + .msep { margin-left: 3px; margin-right: 9px; }
.mb + .mb { margin-left: 13px; }

.sheets { display: flex; height: 21px; padding-left: 1px; border-bottom: 1px solid #000; background: #f0f0f0; flex: none; }
.sheet { display: grid; place-items: center; width: 68px; height: 20px; margin-right: -2px; }
.sheet > * { grid-area: 1 / 1; }
.sheet svg { width: 68px; height: 20px; fill: #fff; stroke: #000; }
.sheet span { z-index: 1; line-height: 18px; }
.sheet.cur { color: #fff; z-index: 1; }
.sheet.cur svg { fill: #000; }

.status { display: flex; height: 29px; background: linear-gradient(#f0eeea, #e9e5e1); line-height: 28px; flex: none; align-items: center; }
.coords { width: 332px; padding-left: 7px; font: 10px/24px "Liberation Mono", monospace; border-right: 1px solid #d4d2ce; }
.blank { width: 170px; height: 24px; border-right: 1px solid #d4d2ce; }
.ratio { flex: 1; padding-left: 4px; }
.ime { display: flex; align-items: center; gap: 4px; height: 26px; margin: -4px 1px 0 0; padding-right: 2px; border: 1px solid #b5cfee; background: #fff; }
.imelogo { width: 32px; height: 32px; margin: -6px 0 0 -6px; }
.zhong { width: 20px; text-align: center; font-size: 15px; font-weight: bold; color: #0b6fd6; }
.glow { background: linear-gradient(120deg, #d8fbff, #fff 50%, #fde6fa); }
.sb { width: 34px; height: 24px; display: grid; place-items: center; border-right: 1px solid #d4d2ce; }
.sb:last-child { width: 28px; border-right: 0; }

.taskbar { display: flex; align-items: center; height: 47px; padding: 0 17px 0 11px; border-top: 1px solid #a8bcc2; background: linear-gradient(90deg, #dbe9e8, #d6eaf2 50%, #dbe8f2); flex: none; }
.task { position: relative; display: grid; place-items: center; width: 38px; height: 38px; margin-right: 6px; border-radius: 4px; flex: none; }
.task svg { width: 24px; height: 24px; }
.start { width: 42px; }
.run::after { content: ""; position: absolute; bottom: 0; width: 6px; height: 3px; border-radius: 2px; background: #7c8a8e; }
.now { background: #edf5f7; }
.now::after { width: 16px; background: #1d7f95; }
.search { display: flex; align-items: center; gap: 9px; width: 217px; height: 31px; padding-left: 8px; margin-right: 6px; border: 1px solid #c3d2d4; border-radius: 16px; background: #f4f9f9; }
.search input { width: 160px; border: 0; background: none; font: 14px "Noto Sans CJK SC", sans-serif; outline: 0; }
.search input::placeholder { color: #555; }
.tray { display: flex; align-items: center; gap: 18px; margin-left: auto; }
.lang { font-size: 14px; }
.net { display: flex; gap: 9px; margin-left: 4px; }
.clock { text-align: right; margin-left: -2px; font-family: Roboto, "Noto Sans CJK SC", sans-serif; }
```
